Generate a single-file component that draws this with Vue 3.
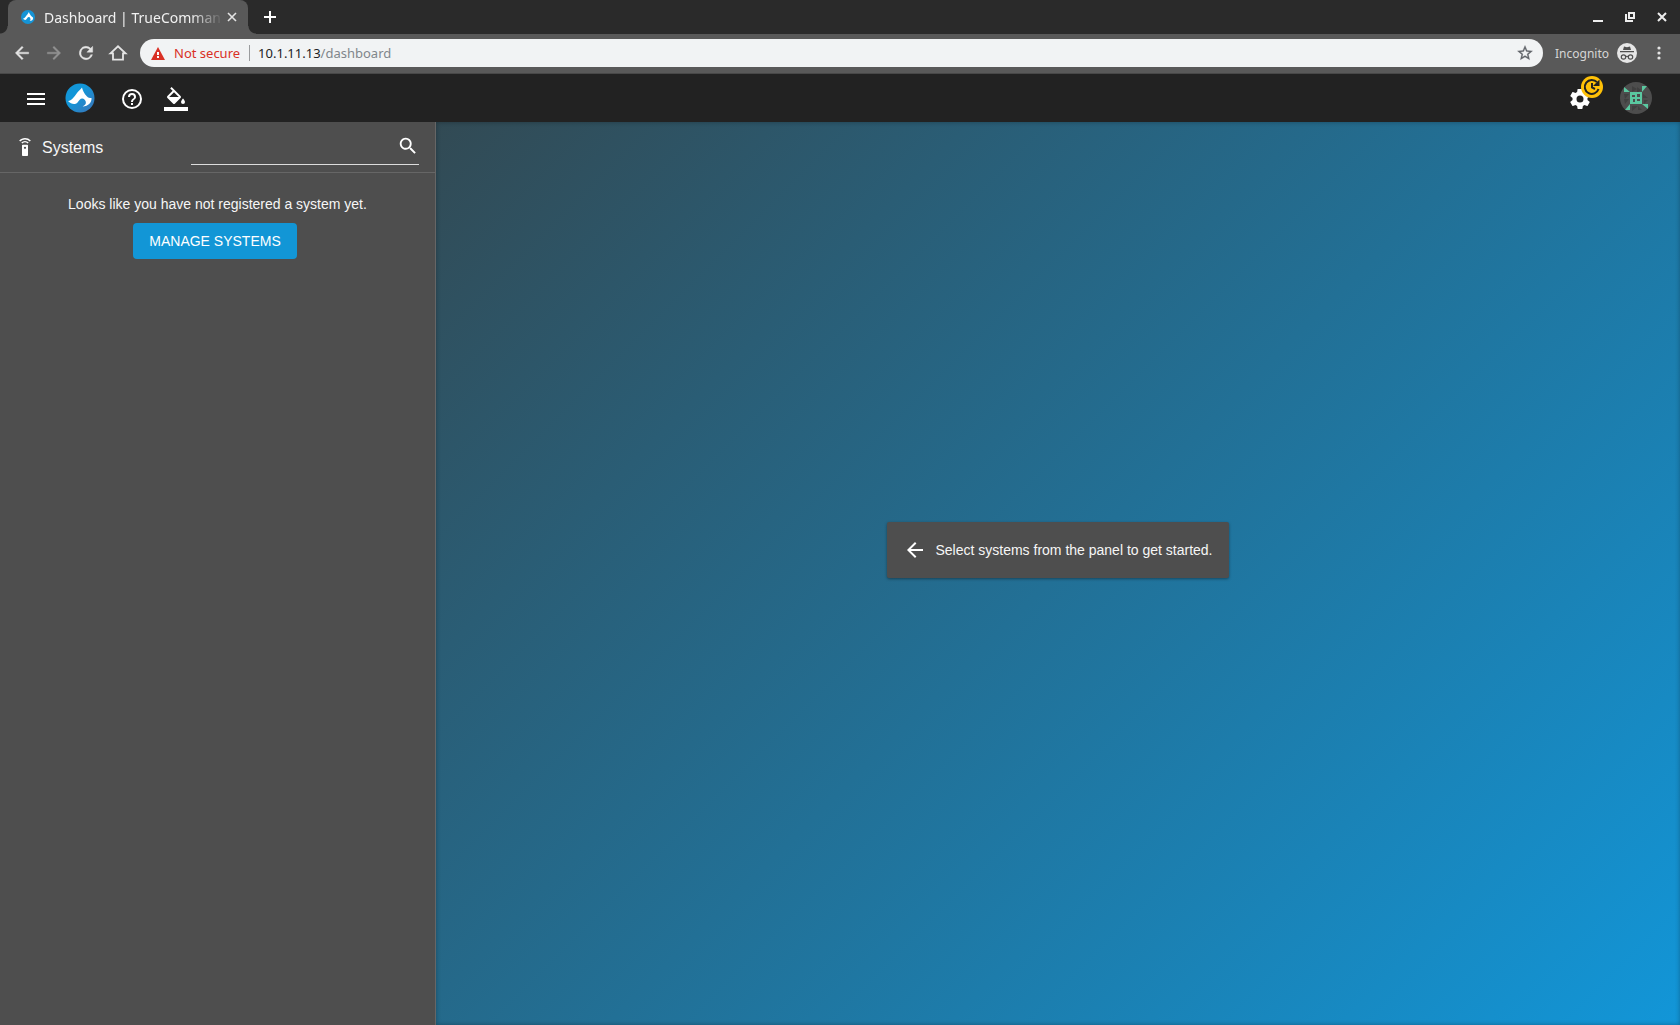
<script setup>
const pageTitle = 'Dashboard | TrueComman'
</script>

<template>
  <div class="window">
    <div class="tabstrip">
      <div class="tab">
        <svg class="favicon" viewBox="0 0 30 30" aria-hidden="true">
          <circle cx="15" cy="15" r="15" fill="#1594d6" />
          <path fill="#fff" d="M4 19C8 18 11 12 14 9l3-4.500C18 8 20 11 23 14c2 1.500 3 2 3 3.500 0 3.500-2.500 5.500-8 5.500 2-1.200 3-2.500 2-5-.8-2-2-3-3.500-3-2 0-2.500 2-4.500 4.500S7.500 22 4 19z" />
        </svg>
        <span class="tab-title">{{ pageTitle }}</span>
        <button class="plain tab-close" aria-label="Close tab">
          <svg width="10" height="10" viewBox="0 0 10 10"><path d="M1 1l8 8M9 1L1 9" stroke="#e4e4e4" stroke-width="1.600" /></svg>
        </button>
      </div>
      <button class="plain new-tab" aria-label="New tab">
        <svg width="12" height="12" viewBox="0 0 12 12"><path d="M6 0v12M0 6h12" stroke="#fff" stroke-width="2" /></svg>
      </button>
      <div class="window-controls">
        <button class="plain" aria-label="Minimize">
          <svg width="10" height="10" viewBox="0 0 10 10"><path d="M0 9h10" stroke="#eee" stroke-width="2" /></svg>
        </button>
        <button class="plain" aria-label="Restore">
          <svg width="10" height="10" viewBox="0 0 10 10" fill="none" stroke="#eee"><path d="M4 1h5v5H4z" stroke-width="2" /><path d="M1 2v7h7" stroke-width="2" /></svg>
        </button>
        <button class="plain" aria-label="Close">
          <svg width="10" height="10" viewBox="0 0 10 10"><path d="M1 1l8 8M9 1L1 9" stroke="#eee" stroke-width="2" /></svg>
        </button>
      </div>
    </div>

    <div class="toolbar">
      <button class="plain nav" aria-label="Back">
        <svg viewBox="0 0 24 24"><path fill="#e4e4e4" stroke="#e4e4e4" stroke-width=".5" d="M20 11H7.800l5.600-5.600L12 4l-8 8 8 8 1.400-1.400L7.800 13H20z" /></svg>
      </button>
      <button class="plain nav" aria-label="Forward">
        <svg viewBox="0 0 24 24"><path fill="#929292" stroke="#929292" stroke-width=".5" d="M12 4l-1.400 1.400 5.600 5.600H4v2h12.200l-5.600 5.600L12 20l8-8z" /></svg>
      </button>
      <button class="plain nav" aria-label="Reload">
        <svg viewBox="0 0 24 24"><path fill="#e4e4e4" stroke="#e4e4e4" stroke-width=".5" d="M17.650 6.350A8 8 0 1 0 19.730 14h-2.080A6 6 0 1 1 12 6c1.660 0 3.140.69 4.220 1.780L13 11h7V4z" /></svg>
      </button>
      <button class="plain nav" aria-label="Home">
        <svg viewBox="0 0 24 24"><path fill="none" stroke="#e4e4e4" stroke-width="2.200" d="M3 12.500L12 4l9 8.500h-3V20H6v-7.500z" /></svg>
      </button>
      <div class="address">
        <svg class="warning" width="14" height="13" viewBox="0 0 14 13" aria-hidden="true"><path fill="#d93025" d="M7 0l7 13H0z" /><path stroke="#fff" stroke-width="2" d="M7 5v3M7 9v2" /></svg>
        <span class="insecure">Not secure</span>
        <span class="divider"></span>
        <span class="url">10.1.11.13<span class="path">/dashboard</span></span>
        <button class="plain star" aria-label="Bookmark this page">
          <svg width="18" height="18" viewBox="0 0 24 24"><path fill="#5f6368" stroke="#5f6368" stroke-width=".4" d="M22 9.240l-7.190-.62L12 2 9.190 8.630 2 9.240l5.460 4.730L5.820 21 12 17.270 18.180 21l-1.630-7.030zM12 15.400l-3.760 2.270 1-4.280-3.320-2.880 4.380-.38L12 6.100l1.710 4.040 4.380.38-3.320 2.880 1 4.280z" /></svg>
        </button>
      </div>
      <span class="incognito">Incognito</span>
      <svg class="spy" width="20" height="20" viewBox="0 0 20 20" aria-hidden="true">
        <circle cx="10" cy="10" r="10" fill="#e6e6e6" />
        <path fill="#505050" d="M7 3.500l3 .7 3-.7 1 3.500H6zM3 8h14v1.200H3z" />
        <g fill="none" stroke="#505050" stroke-width="1.200"><circle cx="6.500" cy="14" r="2.200" /><circle cx="13.500" cy="14" r="2.200" /><path d="M8.700 13.600q1.300-.7 2.600 0" /></g>
      </svg>
      <button class="plain menu" aria-label="Browser menu">
        <svg width="4" height="14" viewBox="0 0 4 14" fill="#e4e4e4"><circle cx="2" cy="2" r="1.600" /><circle cx="2" cy="7" r="1.600" /><circle cx="2" cy="12" r="1.600" /></svg>
      </button>
    </div>

    <header class="app-bar">
      <button class="plain action" aria-label="Toggle navigation">
        <svg width="24" height="24" viewBox="0 0 24 24"><path fill="#fff" d="M3 18h18v-2H3zm0-5h18v-2H3zm0-7v2h18V6z" /></svg>
      </button>
      <a class="logo" href="#" aria-label="TrueCommand">
        <svg width="30" height="30" viewBox="0 0 30 30">
          <defs>
            <linearGradient id="disc" x1="0" y1="0" x2="1" y2="1"><stop offset=".4" stop-color="#1296d8" /><stop offset="1" stop-color="#3d73b7" /></linearGradient>
          </defs>
          <circle cx="15" cy="15" r="14.500" fill="url(#disc)" />
          <path fill="#fff" d="M3 18c3 .3 6-4 9-8 1.500-2 3.500-3.500 5-5.500C17.500 7 19 10.500 22 13.500c1 1.500 2.500 1.500 4.500 1.500.5 4-3 8.500-9 8.500 2.500-1 3.800-2.500 3.300-4.700-.6-1.800-1.800-3.300-3.600-3.300-2 0-3 1.700-4.700 4S6 21.500 3 18z" />
        </svg>
      </a>
      <button class="plain action help" aria-label="Help">
        <svg width="24" height="24" viewBox="0 0 24 24"><path fill="#fff" d="M11 18h2v-2h-2zm1-16a10 10 0 1 0 0 20 10 10 0 0 0 0-20zm0 18a8 8 0 1 1 0-16 8 8 0 0 1 0 16zm0-14a4 4 0 0 0-4 4h2a2 2 0 1 1 4 0c0 2-3 1.750-3 5h2c0-2.250 3-2.500 3-5a4 4 0 0 0-4-4z" /></svg>
      </button>
      <button class="plain action theme" aria-label="Choose theme">
        <svg width="24" height="24" viewBox="0 0 24 24" fill="#fff"><path d="M16.560 8.940L7.620 0 6.210 1.410l2.380 2.380-5.150 5.150a1.500 1.500 0 0 0 0 2.120l5.500 5.500a1.500 1.500 0 0 0 2.120 0l5.500-5.500a1.500 1.500 0 0 0 0-2.120zM5.210 10L10 5.210 14.790 10zM19 11.500s-2 2.170-2 3.500a2 2 0 0 0 4 0c0-1.330-2-3.500-2-3.500zM0 20h24v4H0z" /></svg>
      </button>
      <button class="plain action settings" aria-label="Settings">
        <svg width="24" height="24" viewBox="0 0 24 24"><path fill="#fff" d="M19.430 12.980c.04-.32.07-.64.07-.98s-.03-.66-.07-.98l2.110-1.650c.19-.15.24-.42.12-.64l-2-3.460c-.12-.22-.39-.3-.61-.22l-2.490 1c-.52-.4-1.080-.73-1.690-.98l-.38-2.650A.49.49 0 0 0 14 2h-4c-.25 0-.46.18-.49.42l-.38 2.650c-.61.25-1.170.59-1.690.98l-2.490-1c-.23-.09-.49 0-.61.22l-2 3.460c-.13.22-.07.49.12.64l2.110 1.650c-.04.32-.07.65-.07.98s.03.66.07.98l-2.110 1.650c-.19.15-.24.42-.12.64l2 3.460c.12.22.39.3.61.22l2.490-1c.52.4 1.080.73 1.690.98l.38 2.650c.03.24.24.42.49.42h4c.25 0 .46-.18.49-.42l.38-2.650c.61-.25 1.170-.59 1.690-.98l2.490 1c.23.09.49 0 .61-.22l2-3.460c.12-.22.07-.49-.12-.64zM12 15.500a3.500 3.500 0 1 1 0-7 3.500 3.500 0 0 1 0 7z" /></svg>
        <span class="badge">
          <svg width="18" height="18" viewBox="0 0 18 18" fill="none" stroke="#222" stroke-width="2"><path d="M15.500 11A7 7 0 1 1 14 4.200M9 5v4.500l3 1.500" /><path fill="#222" stroke="none" d="M16.500 1.500v6.500H10z" /></svg>
        </span>
      </button>
      <button class="plain avatar" aria-label="Account">
        <svg width="32" height="32" viewBox="0 0 32 32">
          <circle cx="16" cy="16" r="16" fill="#4d4d4d" />
          <path fill="#404040" d="M12 4l5 3-5 3zM17 5l4 3-4 3zM4 12h5l-4 5zM23 12l5 4h-5zM4 17h5l-4 5zM24 18h4l-4 4zM12 24h6l-6 5zM18 24l4 4h-4z" />
          <path fill="#5ac8a0" fill-rule="evenodd" d="M10 10h12v12H10zm2 3v2h3v-2zm5-1v3h3v-3zm-4 5v3h2v-3zm4 0v2h3v-2z" />
          <path fill="#5ac8a0" d="M4 5l6 5H4zM22 4h5l-5 6zM10 22v6H5zM22 22h6v5z" />
        </svg>
      </button>
    </header>

    <div class="body">
      <aside class="sidebar">
        <div class="panel-head">
          <svg class="remote" width="18" height="18" viewBox="0 0 24 24" fill="#fff" aria-hidden="true"><path d="M15 9H9c-.55 0-1 .45-1 1v13c0 .55.45 1 1 1h6c.55 0 1-.45 1-1V10c0-.55-.45-1-1-1zm-3 5.500a1.500 1.500 0 1 1 0-3 1.500 1.500 0 0 1 0 3zM7.050 6.050l1.410 1.410a5 5 0 0 1 7.080 0l1.410-1.410a7 7 0 0 0-9.900 0zM12 0C8.960 0 6.210 1.230 4.220 3.220l1.410 1.410a9 9 0 0 1 12.740 0l1.410-1.410A11 11 0 0 0 12 0z" /></svg>
          <label class="panel-title" for="system-search">Systems</label>
          <div class="search">
            <input id="system-search" type="text" />
            <svg width="22" height="22" viewBox="0 0 24 24" aria-hidden="true"><path fill="#fff" d="M15.500 14h-.79l-.28-.27a6.500 6.500 0 1 0-.7.7l.27.28v.79l5 4.990L20.490 19zm-6 0a4.500 4.500 0 1 1 0-9 4.500 4.500 0 0 1 0 9z" /></svg>
          </div>
        </div>
        <div class="empty">
          <p>Looks like you have not registered a system yet.</p>
          <button class="manage">MANAGE SYSTEMS</button>
        </div>
      </aside>
      <main class="stage">
        <div class="hint">
          <svg width="24" height="24" viewBox="0 0 24 24" aria-hidden="true"><path fill="#fff" d="M20 11H7.830l5.590-5.590L12 4l-8 8 8 8 1.410-1.410L7.830 13H20z" /></svg>
          <span>Select systems from the panel to get started.</span>
        </div>
      </main>
    </div>
  </div>
</template>

<style>
body {
  margin: 0;
  background: #4e4e4e;
}
</style>

<style scoped>
.window {
  display: flex;
  flex-direction: column;
  min-height: 100vh;
  font-family: "Liberation Sans", Arial, sans-serif;
  font-size: 14px;
  color: #f6f6f6;
}
.plain {
  display: flex;
  flex: none;
  padding: 0;
  border: 0;
  background: none;
  cursor: pointer;
}
svg {
  display: block;
  flex: none;
}
.tabstrip,
.toolbar {
  display: flex;
  align-items: center;
  font-family: "Noto Sans", "Open Sans", sans-serif;
}
.tabstrip {
  height: 34px;
  padding-left: 8px;
  background: #2a2a2a;
}
.tab {
  position: relative;
  display: flex;
  align-items: center;
  box-sizing: border-box;
  width: 240px;
  height: 34px;
  padding: 0 11px 0 13px;
  border-radius: 8px 8px 0 0;
  background: #595959;
}
.tab::before,
.tab::after {
  content: "";
  position: absolute;
  bottom: 0;
  width: 8px;
  height: 8px;
}
.tab::before {
  right: 100%;
  background: radial-gradient(circle at 0 0, transparent 7px, #595959 8px);
}
.tab::after {
  left: 100%;
  background: radial-gradient(circle at 100% 0, transparent 7px, #595959 8px);
}
.favicon {
  width: 14px;
  height: 14px;
}
.tab-title {
  flex: 1;
  margin: 0 4px 0 9px;
  white-space: nowrap;
  font-size: 14px;
  color: #f1f1f1;
  mask-image: linear-gradient(to right, #000 82%, transparent);
}
.new-tab {
  margin-left: 16px;
}
.window-controls {
  display: flex;
  gap: 22px;
  margin-left: auto;
  padding-right: 13px;
}
.toolbar {
  box-sizing: border-box;
  height: 40px;
  padding: 0 19px 1px 12px;
  border-bottom: 1px solid #484848;
  background: #595959;
  font-size: 13px;
}
.nav {
  margin-right: 12px;
}
.nav svg {
  width: 20px;
  height: 20px;
}
.address {
  display: flex;
  flex: 1;
  align-items: center;
  height: 28px;
  padding: 0 9px 0 11px;
  border-radius: 14px;
  background: #f1f3f4;
}
.insecure {
  margin: 0 9px;
  color: #d93025;
}
.divider {
  width: 1px;
  height: 16px;
  margin-right: 8px;
  background: #9a9c9e;
}
.url {
  color: #202124;
}
.path {
  color: #80868b;
}
.star {
  margin-left: auto;
}
.incognito {
  margin: 0 8px 0 12px;
  font-size: 12px;
  color: #d6d6d6;
}
.menu {
  margin-left: 20px;
}
.app-bar {
  display: flex;
  align-items: center;
  height: 48px;
  padding: 0 28px 0 24px;
  background: #222;
}
.action {
  margin-top: 2px;
}
.logo {
  margin-left: 17px;
}
.help {
  margin-left: 25px;
}
.theme {
  margin-left: 20px;
}
.settings {
  position: relative;
  margin-left: auto;
}
.badge {
  position: absolute;
  top: -11px;
  left: 13px;
  display: flex;
  align-items: center;
  justify-content: center;
  width: 22px;
  height: 22px;
  border-radius: 50%;
  background: #ffc107;
}
.avatar {
  margin-left: 28px;
}
.body {
  display: flex;
  flex: 1;
}
.sidebar {
  box-sizing: border-box;
  width: 436px;
  flex: none;
  border-right: 1px solid #666;
  background: #4e4e4e;
}
.panel-head {
  display: flex;
  align-items: center;
  box-sizing: border-box;
  height: 51px;
  padding: 0 16px;
  border-bottom: 1px solid #666;
}
.panel-title {
  margin: 2px 0 0 8px;
  font-size: 16px;
}
.search {
  display: flex;
  align-items: center;
  box-sizing: border-box;
  width: 228px;
  height: 36px;
  margin-left: auto;
  padding-bottom: 2px;
  border-bottom: 1px solid #dcdcdc;
}
.search input {
  flex: 1;
  min-width: 0;
  padding: 0;
  border: 0;
  outline: 0;
  background: none;
  color: #fff;
  font: inherit;
}
.empty {
  display: flex;
  flex-direction: column;
  align-items: center;
  padding-top: 21px;
}
.empty p {
  margin: 0;
  line-height: 20px;
}
.manage {
  height: 36px;
  margin: 9px 5px 0 0;
  padding: 0 16px;
  border: 0;
  border-radius: 4px;
  background: #1296d6;
  color: #fff;
  font: inherit;
}
.stage {
  display: flex;
  flex: 1;
  align-items: center;
  justify-content: center;
  background: linear-gradient(135deg, #324a54, #1296d8);
  box-shadow: inset 0 0 5px rgba(0, 0, 0, 0.3);
}
.hint {
  display: flex;
  align-items: center;
  box-sizing: border-box;
  height: 56px;
  margin-bottom: 47px;
  padding: 0 16px;
  border-radius: 2px;
  background: #4e4e4e;
  box-shadow: 0 1px 3px rgba(0, 0, 0, 0.4);
}
.hint span {
  margin-left: 8px;
}
</style>
